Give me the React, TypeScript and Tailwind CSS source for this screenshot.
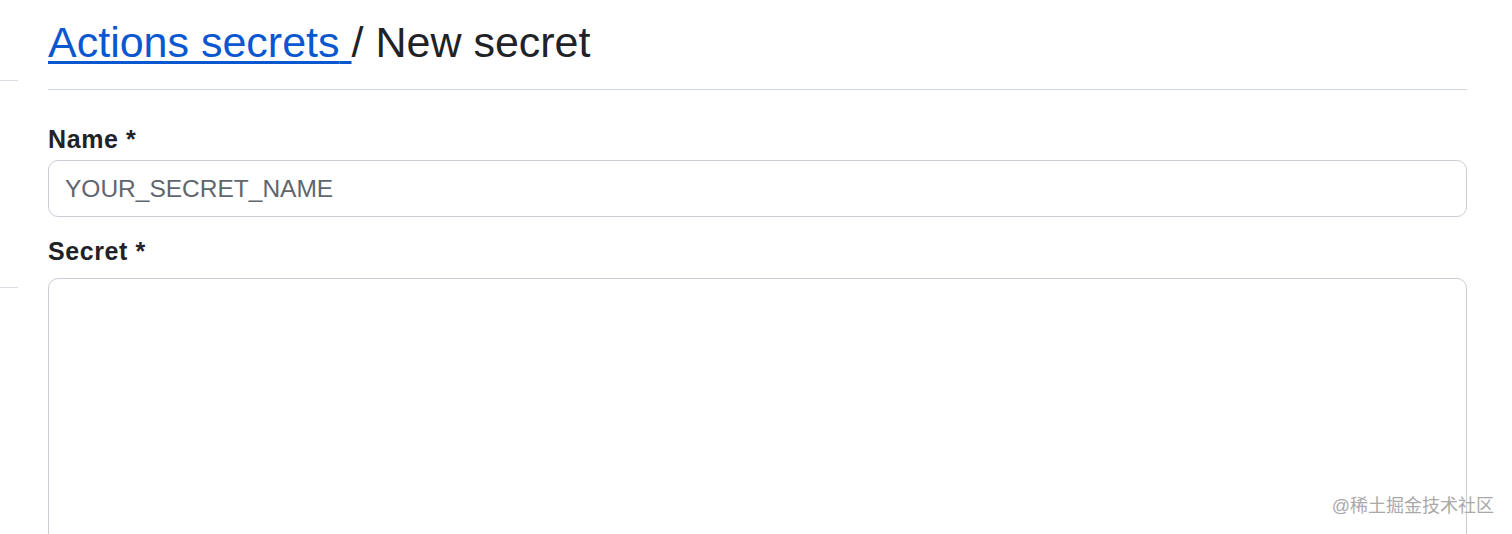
import React from 'react';

const font = { fontFamily: '"Liberation Sans", Arial, sans-serif' };

const Sidebar = () => (
  <div className="w-[18px] shrink-0">
    <div className="mt-[80px] h-px w-full bg-[#d8dee4]"></div>
    <div className="mt-[206px] h-px w-full bg-[#d8dee4]"></div>
  </div>
);

const App = () => {
  return (
    <div className="relative h-[534px] w-full overflow-hidden bg-white text-[#1f2328]" style={font}>
      <div className="flex gap-[30px] pr-[45px]">
        <Sidebar />

        <div className="min-w-0 flex-1">
          <div className="border-b border-[#d0d7de] pt-[16px] pb-[21px]">
            <h2 className="text-[43px] leading-[52px] font-normal">
              <a href="#" className="text-[#0b57d0] underline decoration-[3px] underline-offset-[4px]">
                Actions secrets{' '}
              </a>
              / New secret
            </h2>
          </div>

          <form className="flex flex-col">
            <label className="mt-[34px] text-[25px] leading-[30px] font-bold tracking-[0.6px]">Name *</label>
            <input
              type="text"
              placeholder="YOUR_SECRET_NAME"
              className="mt-[6px] h-[57px] w-full rounded-[10px] border border-[#c9ced4] bg-white px-[16px] text-[24.5px] text-[#1f2328] outline-none placeholder:text-[#5f666e]"
              style={font}
            />

            <label className="mt-[19px] text-[25px] leading-[30px] font-bold tracking-[0.6px]">Secret *</label>
            <textarea
              className="mt-[12px] h-[300px] w-full resize-none rounded-[10px] border border-[#c9ced4] bg-white px-[16px] py-[12px] text-[24.5px] outline-none"
              style={font}
            ></textarea>
          </form>
        </div>
      </div>

      <div
        className="absolute right-[18px] bottom-[16px] text-[18px] leading-[24px] text-[#a9a9a9]"
        style={{ fontFamily: '"Liberation Sans", "Noto Sans CJK SC", sans-serif' }}
      >
        @稀土掘金技术社区
      </div>
    </div>
  );
};

export default App;
